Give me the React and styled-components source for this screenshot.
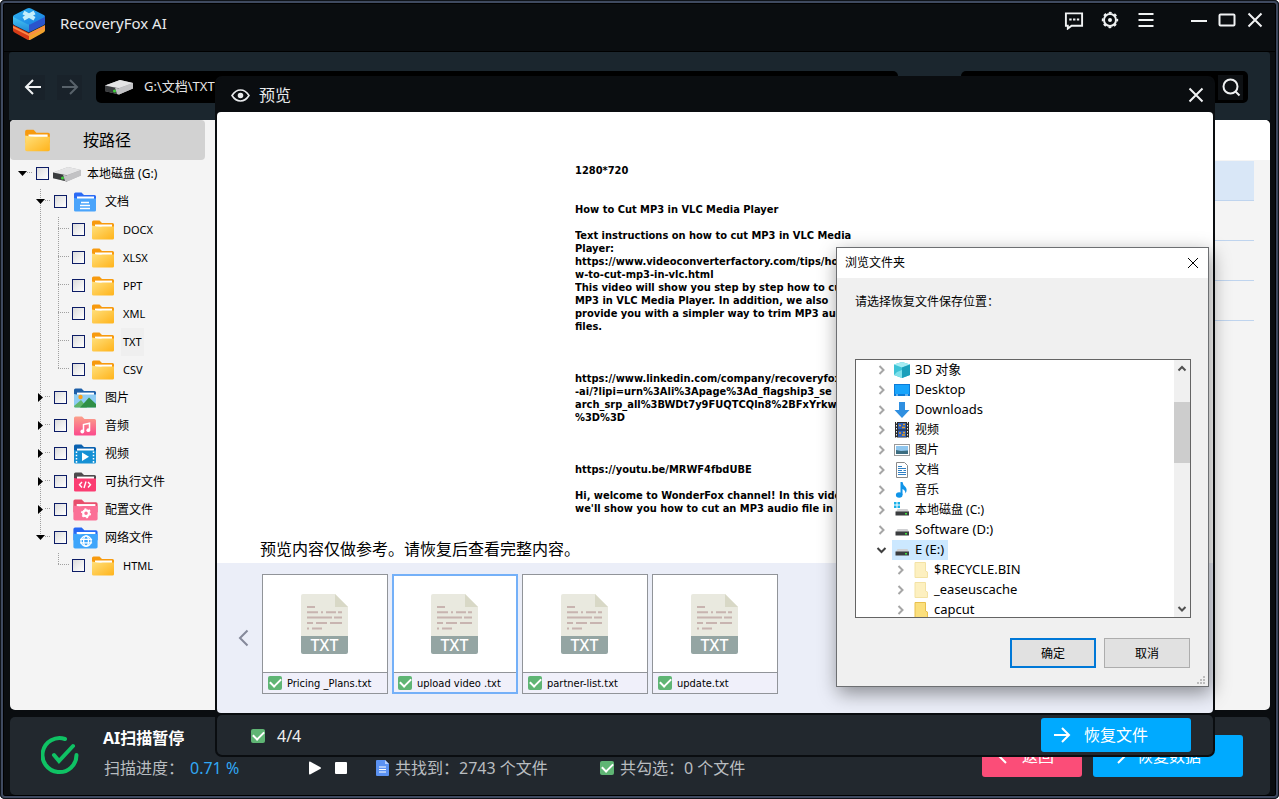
import React from "react";
import styled, { createGlobalStyle, css } from "styled-components";

const ui = `"Noto Sans", "Noto Sans CJK SC", sans-serif`;
const tahoma = `"DejaVu Sans Condensed", "Noto Sans", "Noto Sans CJK SC", sans-serif`;
const c = {
  frame: "#0a0d10",
  edge: "#3f4a60",
  toolbar: "#1b262e",
  panel: "#22282e",
  page: "#f4f4f4",
  strip: "#ebeef8",
  blue: "#00aaff",
  pink: "#fb4d78",
  muted: "#b9bdc0",
};

const Global = createGlobalStyle`
  * { box-sizing: border-box; }
  body { margin: 0; background: #fff; font-family: ${ui}; font-size: 12px; color: #000; }
  button { font-family: inherit; padding: 0; border: 0; background: none; color: inherit; }
  ul { list-style: none; margin: 0; padding: 0; }
  svg { display: block; flex: none; }
`;

/* ---------- frame ---------- */
const Frame = styled.div`
  position: relative;
  display: flex;
  flex-direction: column;
  min-height: 100vh;
  padding: 4px;
  overflow: hidden;
  border-radius: 5px;
  background: ${c.frame};
  box-shadow: inset 0 0 0 1px #10141a, inset 0 0 0 3px ${c.edge}, inset 0 0 0 4px #000;
`;
const TitleBar = styled.header`
  display: flex;
  align-items: flex-start;
  height: 48px;
  padding: 4px 10px 0 9px;
  border-bottom: 1px solid #000;
`;
const AppName = styled.h1`
  flex: 1;
  margin: 0 0 0 15px;
  font: 400 15px/30px "Noto Sans", sans-serif;
  color: #e8eaec;
`;
const Group = styled.div`
  display: flex;
  gap: ${(p) => p.$gap}px;
  margin-left: 33px;
  padding-top: 2px;
`;
const IconButton = styled.button`
  display: flex;
  align-items: center;
  justify-content: center;
  width: ${(p) => p.$size || 20}px;
  height: ${(p) => p.$size || 20}px;
  color: ${(p) => (p.$dim ? "#58626a" : "#f0f2f3")};
  background: ${(p) => p.$bg || "none"};
`;

/* ---------- tool bar ---------- */
const ToolBar = styled.nav`
  display: flex;
  align-items: center;
  height: 68px;
  margin: 0 5px;
  padding: 2px 22px 0 11px;
  background: ${c.toolbar};
  border-radius: 3px 3px 0 0;
`;
const NavButtons = styled.div`
  display: flex;
  gap: 12px;
  width: 76px;
`;
const PathBox = styled.label`
  display: flex;
  align-items: center;
  flex: 1;
  height: 32px;
  padding-left: 8px;
  gap: 10px;
  border-radius: 5px;
  background: #000;
`;
const SearchBox = styled(PathBox)`
  flex: 0 0 287px;
  margin-left: 63px;
  padding-right: 5px;
`;
const Field = styled.input`
  flex: 1;
  min-width: 0;
  height: 28px;
  padding: 0 0 4px;
  border: 0;
  outline: 0;
  background: none;
  color: #e6e6e6;
  font: 13px ${ui};
`;

/* ---------- main panes ---------- */
const Main = styled.main`
  display: flex;
  flex: 1;
  margin: 0 5px 0 6px;
  border-radius: 4px 5px 5px 5px;
  background: ${c.page};
  overflow: hidden;
`;
const SideBar = styled.aside`
  width: 195px;
`;
const SideTab = styled.button`
  display: flex;
  align-items: center;
  width: 100%;
  height: 40px;
  padding-left: 14px;
  gap: 32px;
  border-radius: 4px;
  background: #d2d2d2;
  font-size: 16px;
`;
const TabName = styled.span`
  padding-bottom: 2px;
`;
const Results = styled.table`
  flex: 1;
  align-self: flex-start;
  border-spacing: 0;
  margin-left: 10px;
`;
const HeadCell = styled.th`
  height: 41px;
  padding: 0;
  background: #fff;
  border-bottom: 1px solid ${c.page};
`;
const Cell = styled.td`
  height: 40px;
  padding: 0;
  background: ${(p) => (p.$active ? "#d9e7f7" : p.$edge ? c.page : "transparent")};
  border-bottom: 1px solid ${(p) => (p.$edge ? c.page : "#bfd4ee")};
  width: ${(p) => (p.$edge ? "16px" : "auto")};
`;

/* ---------- folder tree ---------- */
const dotsV = "repeating-linear-gradient(to bottom, #a0a0a0 0 1px, transparent 1px 2px)";
const dotsH = "repeating-linear-gradient(to right, #a0a0a0 0 1px, transparent 1px 2px)";
const Tree = styled.ul`
  padding-left: 8px;
`;
const Branch = styled.ul`
  padding-left: 18px;
`;
const Node = styled.li`
  ${(p) =>
    p.$joined &&
    css`
      background: ${dotsV} 4px 1px / 1px ${p.$last ? "12px" : "100%"} no-repeat;
    `}
`;
const NodeRow = styled.div`
  display: flex;
  align-items: center;
  height: 28px;
`;
const Stub = styled.span`
  display: flex;
  align-items: center;
  width: 15px;
  height: 26px;
  align-self: flex-start;
  margin-right: 3px;
  background: ${dotsH} ${(p) => (p.$leaf ? 4 : 9)}px 12px / ${(p) => (p.$leaf ? 11 : 6)}px 1px no-repeat;
`;
const Tick = styled.input`
  appearance: none;
  width: 13px;
  height: 13px;
  margin: 0 4px 2px 0;
  border: 1px solid #0c1c66;
  background: linear-gradient(135deg, #dcdcdc, #fff);
`;
const NodeIcon = styled.span`
  display: flex;
  justify-content: center;
  width: 28px;
  margin-right: 4px;
`;
const NodeLabel = styled.label`
  padding: 0 2px;
  font: 12px/28px ${ui};
  ${(p) => p.$latin && css`font-size: 11px;`}
  ${(p) => p.$active && css`background: #efefef;`}
`;

/* ---------- status bar ---------- */
const StatusBar = styled.footer`
  display: flex;
  height: 78px;
  margin: 7px 5px 0 6px;
  padding: 0 27px 0 31px;
  border-radius: 5px;
  background: ${c.panel};
`;
const StatusBody = styled.div`
  flex: 1;
  padding: 7px 0 0 24px;
`;
const StatusTitle = styled.h2`
  margin: 0;
  font: 700 16px/28px ${ui};
  color: #fff;
`;
const StatusRow = styled.div`
  display: flex;
  align-items: center;
  margin-top: 2px;
  padding-left: 1px;
  line-height: 28px;
  font-size: 16px;
  color: ${c.muted};
`;
const Progress = styled.span`
  width: 203px;
`;
const Percent = styled.span`
  margin-left: 6px;
  color: #31a8f5;
`;
const Count = styled.span`
  display: flex;
  align-items: center;
  gap: 6px;
  width: 224px;
`;
const PlayGroup = styled.div`
  display: flex;
  gap: 10px;
  width: 69px;
  color: #fff;
`;
const Actions = styled.div`
  display: flex;
  gap: 11px;
  padding-top: 18px;
`;
const Action = styled.button`
  display: flex;
  align-items: center;
  width: ${(p) => p.$w}px;
  height: ${(p) => p.$h}px;
  padding-left: ${(p) => p.$pad}px;
  gap: ${(p) => p.$gap}px;
  border-radius: 3px;
  background: ${(p) => p.$bg};
  color: #fff;
  font-size: 16px;
`;
const ActionName = styled.span`
  padding-bottom: 3px;
`;

/* ---------- preview window ---------- */
const Preview = styled.section`
  position: absolute;
  inset: 76px 64px 42px 215px;
  display: flex;
  flex-direction: column;
  border: 2px solid ${c.frame};
  border-radius: 7px;
  background: ${c.frame};
`;
const PreviewTitle = styled.div`
  display: flex;
  align-items: center;
  height: 34px;
  padding: 0 7px 0 14px;
  gap: 9px;
  color: #e8eaec;
`;
const PreviewName = styled.h2`
  flex: 1;
  margin: 0;
  font: 400 16px/28px ${ui};
`;
const Document = styled.div`
  display: flex;
  flex-direction: column;
  flex: 1;
  min-height: 0;
  padding: 52px 44px 0 43px;
  border-radius: 4px 4px 0 0;
  background: #fff;
`;
const DocText = styled.pre`
  flex: 1;
  width: 340px;
  min-height: 0;
  margin: 0 0 0 315px;
  overflow: hidden;
  font: 700 11px/13px ${tahoma};
`;
const Note = styled.p`
  margin: 0;
  padding-top: 18px;
  font: 16px/28px ${ui};
`;
const Strip = styled.div`
  display: flex;
  align-items: flex-start;
  height: 150px;
  padding: 11px 16px;
  border-radius: 0 0 4px 4px;
  background: ${c.strip};
`;
const Prev = styled(IconButton)`
  height: 128px;
  margin-right: 9px;
  color: #85899a;
`;
const Cards = styled.ul`
  display: flex;
  gap: 4px;
`;
const Card = styled.li`
  width: 126px;
  height: 120px;
  background: #fff;
  border: ${(p) => (p.$active ? "2px solid #74b0f8" : "1px solid #919499")};
  display: flex;
  flex-direction: column;
`;
const CardPicture = styled.div`
  flex: 1;
  display: flex;
  align-items: center;
  justify-content: center;
`;
const CardName = styled.label`
  display: flex;
  align-items: center;
  height: ${(p) => (p.$active ? 20 : 21)}px;
  padding: ${(p) => (p.$active ? "1px 0 0 4px" : "0 0 0 5px")};
  gap: 5px;
  border-top: 1px solid #919499;
  background: #f0f0fa;
  font: 11px ${tahoma};
`;
const GreenTick = styled.input`
  appearance: none;
  flex: none;
  width: 14px;
  height: 14px;
  margin: 0;
  border-radius: 2px;
  background: #5fb574;
  display: grid;
  place-items: center;
  &:checked::before {
    content: "";
    width: 9px;
    height: 5px;
    margin-bottom: 3px;
    border: solid #fff;
    border-width: 0 0 2px 2px;
    transform: rotate(-45deg);
  }
`;
const PreviewFoot = styled.div`
  display: flex;
  align-items: center;
  height: 40px;
  margin-top: 2px;
  padding: 0 22px 0 34px;
  border-radius: 5px;
  background: ${c.panel};
`;
const Total = styled.label`
  display: flex;
  align-items: center;
  flex: 1;
  gap: 12px;
  padding-top: 2px;
  color: #eee;
  font: 16px/28px ${ui};
`;

/* ---------- folder dialog ---------- */
const Dialog = styled.div`
  position: absolute;
  right: 70px;
  bottom: 112px;
  width: 373px;
  height: 440px;
  display: flex;
  flex-direction: column;
  border: 1px solid #6d6f72;
  background: #f0f0f0;
  box-shadow: 2px 6px 18px rgba(0, 0, 0, 0.42);
`;
const DialogTitle = styled.div`
  display: flex;
  align-items: center;
  justify-content: space-between;
  height: 30px;
  padding: 0 5px 0 8px;
  background: #fff;
`;
const DialogName = styled.h2`
  margin: 0;
  font: 400 12px/28px ${ui};
`;
const Prompt = styled.p`
  height: 81px;
  margin: 0;
  padding: 14px 18px 0;
  line-height: 20px;
`;
const ListBox = styled.div`
  display: flex;
  flex: 1;
  min-height: 0;
  margin: 0 17px 0 18px;
  border: 1px solid #646464;
  background: #fff;
`;
const Folders = styled.ul`
  flex: 1;
  overflow: hidden;
`;
const Folder = styled.li`
  display: flex;
  align-items: center;
  height: 20px;
  padding-left: ${(p) => (p.$deep ? 37 : 18)}px;
`;
const FolderName = styled.span`
  display: flex;
  align-items: center;
  gap: 5px;
  margin-left: 3px;
  padding: 0 4px 0 2px;
  height: 20px;
  background: ${(p) => (p.$active ? "#cce8ff" : "none")};
`;
const FolderText = styled.span`
  font: ${(p) => (p.$cjk ? 12 : 13)}px/18px ${ui};
  padding-bottom: ${(p) => (p.$cjk ? 0 : 2)}px;
`;
const Scroll = styled.div`
  display: flex;
  flex-direction: column;
  width: 16px;
  background: #f0f0f0;
  color: #505050;
`;
const Thumb = styled.div`
  height: 61px;
  margin: 25px 0 auto;
  background: #cdcdcd;
`;
const Buttons = styled.div`
  display: flex;
  justify-content: flex-end;
  gap: 8px;
  padding: 20px 18px 0;
`;
const DialogButton = styled.button`
  width: 86px;
  height: 30px;
  border: ${(p) => (p.$main ? "2px solid #0078d7" : "1px solid #adadad")};
  background: #e1e1e1;
  font-size: 12px;
`;
const Grip = styled.div`
  display: flex;
  justify-content: flex-end;
  height: 18px;
  padding: 8px 2px 0 0;
`;

/* ---------- drawings ---------- */
const Line = ({ w = 20, h = w, vb, sw = 2, d, children }) => (
  <svg width={w} height={h} viewBox={vb || `0 0 ${w} ${h}`} fill="none" stroke="currentColor" strokeWidth={sw}>
    {d && <path d={d} />}
    {children}
  </svg>
);
const Cross = ({ size = 20, sw = 2 }) => <Line w={size} vb="0 0 20 20" sw={sw} d="M3.5 3.5L16.5 16.5M16.5 3.5L3.5 16.5" />;

const Logo = () => (
  <svg width="32" height="32" viewBox="0 0 32 32">
    <defs>
      <linearGradient id="top" x1="0" y1="0" x2="1" y2="1">
        <stop offset="0" stopColor="#2cb2f2" />
        <stop offset="1" stopColor="#1a7fe0" />
      </linearGradient>
      <linearGradient id="left" x1="0" y1="0" x2="0" y2="1">
        <stop offset="0" stopColor="#49c8f5" />
        <stop offset="1" stopColor="#1c86d6" />
      </linearGradient>
    </defs>
    <path d="M0 17L16 25V32Q15 32 14 31.400L1.500 24.500Q0 23.600 0 22.500Z" fill="#d63c17" />
    <path d="M32 17L16 25V32Q17 32 18 31.400L30.500 24.500Q32 23.600 32 22.500Z" fill="#f2a22e" />
    <path d="M0 18L16 26L32 18V20L16 28L0 20Z" fill="#fb8a4a" />
    <path d="M0 8L16 15.500V24.500L1.500 17.300Q0 16.600 0 15.500Z" fill="url(#left)" />
    <path d="M32 8L16 15.500V24.500L30.500 17.300Q32 16.600 32 15.500Z" fill="#2a55cc" />
    <path d="M14 .6Q16 -.4 18 .6L30.800 7Q32.800 8.200 30.800 9.400L18 15.900Q16 16.900 14 15.900L1.200 9.400Q-.8 8.200 1.200 7Z" fill="url(#top)" />
    <path d="M10.500 4.500L21.500 10.800M21.500 4.500L10.500 10.800" stroke="#c4eefb" strokeWidth="4" />
  </svg>
);
const Drive = () => (
  <svg width="30" height="17" viewBox="0 0 30 17">
    <path d="M1 6.500L16 1L29 4V9.500L15 15.500L1 12Z" fill="#b4b4b6" />
    <path d="M1 6.500L16 1L29 4L15 9Z" fill="#e4e4e5" />
    <path d="M1 6.500L15 9.500V15.500L1 12.300Z" fill="#3a3c3e" />
    <path d="M11 8.700L15 9.500L29 4V9.500L15 15.500L13 15Z" fill="#c2c2c4" />
    <circle cx="10.500" cy="12" r="1.500" fill="#3fd23c" />
  </svg>
);
const FolderShape = ({ back, front, w = 24, children }) => (
  <svg width={w} height={w === 24 ? 20 : 22} viewBox="0 0 24 20">
    <path d="M1 2Q1 .5 2.500 .5H8.500L11 3H21.500Q23 3 23 4.500V12H1Z" fill={back} />
    <path d="M4 4.600H21V9H4Z" fill="#fff" />
    <path d="M1 6Q5 6.800 10 6.400H23V18.200Q23 19.500 21.500 19.500H2.500Q1 19.500 1 18.200Z" fill={front} />
    {children}
  </svg>
);
const Yellow = ({ w }) => (
  <svg width={w || 24} height={w ? w - 4 : 20} viewBox="0 0 24 20">
    <defs>
      <linearGradient id="gold" x1="0" y1="0" x2="1" y2="1">
        <stop offset="0" stopColor="#ffe07c" />
        <stop offset="1" stopColor="#ffb31a" />
      </linearGradient>
    </defs>
    <path d="M1 2Q1 .5 2.500 .5H8.500L11 3H21.500Q23 3 23 4.500V12H1Z" fill="#f79a0e" />
    <path d="M4 4.600H21V9H4Z" fill="#fff" />
    <path d="M1 5.500Q8 7 11.500 6.600H23V18.200Q23 19.500 21.500 19.500H2.500Q1 19.500 1 18.200Z" fill="url(#gold)" />
  </svg>
);
const DocsIcon = () => (
  <FolderShape back="#2a6af5" front="#4aa4fb">
    <path d="M8 10.500H16M7 13.500H17M7 16.500H17" stroke="#fff" strokeWidth="1.500" />
  </FolderShape>
);
const PicsIcon = () => (
  <FolderShape back="#1d5fa8" front="#8fcdf3">
    <circle cx="7.500" cy="9" r="2.200" fill="#f9a11b" />
    <path d="M1 18L8 12L14 19.500H2.500Q1 19.500 1 18Z" fill="#5fb56a" />
    <path d="M7 19.500L16 9.500L23 16V19.500Z" fill="#2f8f46" />
  </FolderShape>
);
const AudioIcon = () => (
  <svg width="24" height="20" viewBox="0 0 24 20">
    <defs>
      <linearGradient id="rose" x1="0" y1="0" x2="0" y2="1">
        <stop offset="0" stopColor="#fba08a" />
        <stop offset="1" stopColor="#fb4a8c" />
      </linearGradient>
    </defs>
    <path d="M1 2Q1 .5 2.500 .5H9L11.500 3H21.500Q23 3 23 4.500V18.200Q23 19.500 21.500 19.500H2.500Q1 19.500 1 18.200Z" fill="url(#rose)" />
    <path d="M10.500 15.500V8.500L16.500 7.200V14" stroke="#fff" strokeWidth="1.500" fill="none" />
    <circle cx="9.300" cy="15.500" r="1.900" fill="#fff" />
    <circle cx="15.300" cy="14.200" r="1.900" fill="#fff" />
  </svg>
);
const VideoIcon = () => (
  <FolderShape back="#0b62b0" front="#1590d4">
    <path d="M3.500 7.500V19M20.500 7.500V19" stroke="#fff" strokeWidth="1.500" strokeDasharray="1.600 1.600" />
    <path d="M9 8.500L16 12.800L9 17Z" fill="#fff" />
  </FolderShape>
);
const CodeIcon = () => (
  <FolderShape back="#4d4a4c" front="#fb3d72">
    <path d="M9 10L6.500 12.800L9 15.500M15 10L17.500 12.800L15 15.500M13 9.500L11 16" stroke="#fff" strokeWidth="1.400" fill="none" />
  </FolderShape>
);
const ConfigIcon = () => (
  <FolderShape back="#e84e6c" front="#fb7096" w={27}>
    <circle cx="12.500" cy="13" r="2.600" stroke="#fff" strokeWidth="2" fill="none" />
    <circle cx="12.500" cy="13" r="3.900" stroke="#fff" strokeWidth="1.300" strokeDasharray="1.800 2.284" fill="none" />
  </FolderShape>
);
const WebIcon = () => (
  <FolderShape back="#2668f5" front="#3ea5fb" w={27}>
    <g stroke="#fff" strokeWidth="1.200" fill="none">
      <circle cx="12.500" cy="12.800" r="4.700" />
      <ellipse cx="12.500" cy="12.800" rx="2.200" ry="4.700" />
      <path d="M7 11.200H18M7 14.400H18" />
    </g>
  </FolderShape>
);
const TxtIcon = () => (
  <svg width="48" height="60" viewBox="0 0 48 60">
    <path d="M2 0H34L47 13V42H0V2Q0 0 2 0Z" fill="#e9e9df" />
    <path d="M34 0L47 13H34Z" fill="#d8d8c6" />
    <path d="M0 42H47V58Q47 60 45 60H2Q0 60 0 58Z" fill="#94a5a3" />
    <path
      d="M6 13H14M6 18.300H17M20 18.300H22M25 18.300H35M37 18.300H41M6 23.600H31M33 23.600H41M6 29H12M15 29H26M29 29H41M6 34.500H8M11 34.500H21"
      stroke="#c8b4b0"
      strokeWidth="2"
    />
    <text x="23.500" y="57" textAnchor="middle" fontFamily="Noto Sans, sans-serif" fontSize="16" fontWeight="500" fill="#fff">
      TXT
    </text>
  </svg>
);
const Triangle = ({ open }) => (
  <svg width="9" height="9" viewBox="0 0 9 9">
    <path d={open ? "M0 2H9L4.500 7Z" : "M2 0V9L7 4.500Z"} fill="#000" />
  </svg>
);
const S16 = ({ children }) => (
  <svg width="16" height="16" viewBox="0 0 16 16">
    {children}
  </svg>
);
const HardDisk = ({ win }) => (
  <S16>
    {win && <path d="M0 0H2.500V2.500H0ZM3.500 0H6V2.500H3.500ZM0 3.500H2.500V6H0ZM3.500 3.500H6V6H3.500Z" fill="#19b0e8" />}
    <path d="M3.500 7H13.500L15 10H2Z" fill="#cfd0d2" />
    <rect x="1.500" y="9.500" width="13.500" height="4" fill="#3a3d3f" />
    <rect x="11" y="11" width="2" height="1.500" fill="#3fe03c" />
  </S16>
);
const smallIcons = {
  cube: (
    <S16>
      <path d="M0 2.500L8 0L16 2.500V13L8 16L0 13Z" fill="#3cc3d6" />
      <path d="M0 2.500L8 0L16 2.500L8 5.500Z" fill="#a4ecf2" />
      <path d="M8 5.500L16 2.500V13L8 16Z" fill="#1a9fba" />
      <path d="M3 10L8 8V16L0 13Z" fill="#7fe0ea" />
    </S16>
  ),
  desktop: (
    <S16>
      <rect y="2" width="16" height="12" fill="#0c7cd8" />
      <rect x="1" y="3" width="14" height="9" fill="#18a4fb" />
      <path d="M2 13H4M11 13H14" stroke="#bfe4ff" />
    </S16>
  ),
  down: (
    <S16>
      <path d="M5 0H11V8H15.500L8 16L.5 8H5Z" fill="#2f8fe0" />
    </S16>
  ),
  film: (
    <S16>
      <rect x="1" y="0" width="14" height="15.500" fill="#2b2b2b" />
      <path d="M2.500 0V16M13.500 0V16" stroke="#eee" strokeDasharray="1.500 1.500" />
      <rect x="4" y="1" width="8" height="6.500" fill="#2d5fb8" />
      <rect x="4" y="8.500" width="8" height="6.500" fill="#2d5fb8" />
      <path d="M5 3.500H7M9 2.500H11M8 5.500H11M5 11H7M8 13H11M9 10.500H11" stroke="#e8a020" strokeWidth="1.500" fill="none" />
    </S16>
  ),
  picture: (
    <S16>
      <rect x=".5" y="2.500" width="15" height="11" fill="#fff" stroke="#9a9a9a" />
      <rect x="2" y="4" width="12" height="8" fill="#8fc6ee" />
      <path d="M2 8L7 9L14 8.500V12H2Z" fill="#3c6d80" />
    </S16>
  ),
  page: (
    <S16>
      <path d="M2.500 .5H10.500L13.500 3.500V15.500H2.500Z" fill="#fff" stroke="#8a8a8a" />
      <path d="M4 4.500H8M4 6.500H12M4 8.500H8M4 12.500H12M9.500 8.500H12M4 10.500H12" stroke="#2f7fc4" />
    </S16>
  ),
  note: (
    <S16>
      <path d="M6.500 0H8.500Q9 3 11 4.500Q14 7.500 11.500 11.500Q11.500 8 8.500 7V13H6.500Z" fill="#1094e8" />
      <ellipse cx="5.200" cy="13" rx="3.300" ry="2.700" fill="#1094e8" />
    </S16>
  ),
  winDisk: <HardDisk win />,
  disk: <HardDisk />,
  pale: (
    <S16>
      <path d="M2 .5H12.500V9L14.500 10V15.500H2Z" fill="#fdf0c0" stroke="#f3e2a4" />
    </S16>
  ),
  gold: (
    <S16>
      <path d="M2 .5H12.500V9L14.500 10V15.500H2Z" fill="#fbdf7c" stroke="#e8c04c" />
    </S16>
  ),
};

/* ---------- data ---------- */
const tree = [
  {
    name: "本地磁盘 (G:)", icon: <Drive />, open: true,
    kids: [
      {
        name: "文档", icon: <DocsIcon />, open: true,
        kids: ["DOCX", "XLSX", "PPT", "XML", "TXT", "CSV"].map((n) => ({ name: n, icon: <Yellow />, latin: true, active: n === "TXT" })),
      },
      { name: "图片", icon: <PicsIcon />, closed: true },
      { name: "音频", icon: <AudioIcon />, closed: true },
      { name: "视频", icon: <VideoIcon />, closed: true },
      { name: "可执行文件", icon: <CodeIcon />, closed: true },
      { name: "配置文件", icon: <ConfigIcon />, closed: true },
      { name: "网络文件", icon: <WebIcon />, open: true, kids: [{ name: "HTML", icon: <Yellow />, latin: true }] },
    ],
  },
];

const TreeNode = ({ node, depth, last }) => {
  const id = `node-${depth}-${node.name}`;
  return (
    <Node $joined={depth > 0} $last={last}>
      <NodeRow>
        <Stub $leaf={!node.open && !node.closed}>{(node.open || node.closed) && <Triangle open={node.open} />}</Stub>
        <Tick type="checkbox" id={id} />
        <NodeIcon>{node.icon}</NodeIcon>
        <NodeLabel htmlFor={id} $latin={node.latin} $active={node.active}>{node.name}</NodeLabel>
      </NodeRow>
      {node.kids && (
        <Branch>
          {node.kids.map((k, i) => (
            <TreeNode key={k.name} node={k} depth={depth + 1} last={i === node.kids.length - 1} />
          ))}
        </Branch>
      )}
    </Node>
  );
};

const files = ["Pricing _Plans.txt", "upload video .txt", "partner-list.txt", "update.txt"];

const folders = [
  ["cube", "3D 对象"], ["desktop", "Desktop"], ["down", "Downloads"], ["film", "视频"], ["picture", "图片"],
  ["page", "文档"], ["note", "音乐"], ["winDisk", "本地磁盘 (C:)"], ["disk", "Software (D:)"], ["disk", "E (E:)", "open"],
  ["pale", "$RECYCLE.BIN", "deep"], ["pale", "_easeuscache", "deep"], ["gold", "capcut", "deep"],
];

const docText = `1280*720


How to Cut MP3 in VLC Media Player

Text instructions on how to cut MP3 in VLC Media
Player:
https://www.videoconverterfactory.com/tips/ho
w-to-cut-mp3-in-vlc.html
This video will show you step by step how to cut
MP3 in VLC Media Player. In addition, we also
provide you with a simpler way to trim MP3 audio
files.



https://www.linkedin.com/company/recoveryfox
-ai/?lipi=urn%3Ali%3Apage%3Ad_flagship3_se
arch_srp_all%3BWDt7y9FUQTCQln8%2BFxYrkw
%3D%3D



https://youtu.be/MRWF4fbdUBE

Hi, welcome to WonderFox channel! In this video
we'll show you how to cut an MP3 audio file in VLC`;

const ArrowRight = ({ size = 18 }) => <Line w={size} vb="0 0 18 18" d="M1 9H16M9 2L16 9L9 16" />;

export default function App() {
  return (
    <>
      <Global />
      <Frame>
        <TitleBar>
          <Logo />
          <AppName>RecoveryFox AI</AppName>
          <Group $gap={16}>
            <IconButton aria-label="反馈">
              <Line d="M2 3H19V16H8L4 19V16H2Z" vb="0 0 21 20" sw={2}>
                <path d="M5.500 9.500H8M9.500 9.500H12M13.500 9.500H16" />
              </Line>
            </IconButton>
            <IconButton aria-label="设置">
              <Line sw={2}>
                <circle cx="10" cy="10" r="6" />
                <circle cx="10" cy="10" r="7.400" strokeWidth="1.600" strokeDasharray="2.900 2.912" strokeDashoffset="1.450" />
                <circle cx="10" cy="10" r="1" />
              </Line>
            </IconButton>
            <IconButton aria-label="菜单"><Line d="M2.500 4H17.500M2.500 10H17.500M2.500 16H17.500" /></IconButton>
          </Group>
          <Group $gap={8}>
            <IconButton aria-label="最小化"><Line d="M2 11H18" /></IconButton>
            <IconButton aria-label="最大化"><Line><rect x="2.500" y="4.500" width="15" height="11" rx="1" /></Line></IconButton>
            <IconButton aria-label="关闭"><Cross /></IconButton>
          </Group>
        </TitleBar>

        <ToolBar>
          <NavButtons>
            <IconButton $size={25} $bg="#19222a" aria-label="后退"><Line w={18} d="M17 9H2M9 2L2 9L9 16" /></IconButton>
            <IconButton $size={25} $bg="#19222a" $dim aria-label="前进"><ArrowRight /></IconButton>
          </NavButtons>
          <PathBox>
            <Drive />
            <Field defaultValue="G:\文档\TXT" aria-label="路径" />
          </PathBox>
          <SearchBox>
            <Field aria-label="搜索" />
            <IconButton $size={25} $bg="#0d1013" aria-label="开始搜索">
              <Line w={20} d="M14.500 14.500L18.500 18.500"><circle cx="9.500" cy="9.500" r="7" /></Line>
            </IconButton>
          </SearchBox>
        </ToolBar>

        <Main>
          <SideBar>
            <SideTab><Yellow w={27} /><TabName>按路径</TabName></SideTab>
            <Tree>{tree.map((n) => <TreeNode key={n.name} node={n} depth={0} last />)}</Tree>
          </SideBar>
          <Results>
            <thead><tr><HeadCell colSpan={2} /></tr></thead>
            <tbody>
              {[0, 1, 2, 3].map((i) => (
                <tr key={i}><Cell $active={i === 0} /><Cell $edge /></tr>
              ))}
            </tbody>
          </Results>
        </Main>

        <StatusBar>
          <svg width="38" height="76" viewBox="0 0 38 76" fill="none" stroke="#0fc264" strokeWidth="4" strokeLinecap="round">
            <path d="M24 22A17 17 0 1 0 35.500 38" />
            <path d="M13 38L18 44L32 29" />
          </svg>
          <StatusBody>
            <StatusTitle>AI扫描暂停</StatusTitle>
            <StatusRow>
              <Progress>扫描进度：<Percent>0.71 %</Percent></Progress>
              <PlayGroup>
                <IconButton $size={16} aria-label="继续">
                  <svg width="14" height="14" viewBox="0 0 14 14">
                    <path d="M1 1.500Q1 0 2.500 .8L12.500 6.200Q13.500 7 12.500 7.800L2.500 13.200Q1 14 1 12.500Z" fill="#fff" />
                  </svg>
                </IconButton>
                <IconButton $size={16} aria-label="停止">
                  <svg width="12" height="12" viewBox="0 0 12 12"><rect width="12" height="12" rx="1" fill="#fff" /></svg>
                </IconButton>
              </PlayGroup>
              <Count>
                <svg width="13" height="16" viewBox="0 0 13 16">
                  <path d="M0 1Q0 0 1 0H9L13 4V15Q13 16 12 16H1Q0 16 0 15Z" fill="#5b92f2" />
                  <path d="M9 0L13 4H9Z" fill="#b7cffb" />
                  <path d="M3 7H10M3 9.500H10M3 12H10" stroke="#fff" />
                </svg>
                <span>共找到：2743 个文件</span>
              </Count>
              <Count as="label">
                <GreenTick type="checkbox" defaultChecked />
                共勾选：0 个文件
              </Count>
            </StatusRow>
          </StatusBody>
          <Actions>
            <Action $w={100} $h={42} $pad={14} $gap={14} $bg={c.pink}>
              <Line w={12} h={18} d="M10 2L3 9L10 16" /><ActionName>返回</ActionName>
            </Action>
            <Action $w={150} $h={42} $pad={16} $gap={10} $bg={c.blue}><ArrowRight /><ActionName>恢复数据</ActionName></Action>
          </Actions>
        </StatusBar>

        <Preview>
          <PreviewTitle>
            <Line w={19} h={13} sw={1.6} d="M1 6.500Q4.500 1 9.500 1T18 6.500Q14.500 12 9.500 12T1 6.500Z">
              <circle cx="9.500" cy="6.500" r="2" fill="currentColor" />
            </Line>
            <PreviewName>预览</PreviewName>
            <IconButton aria-label="关闭预览"><Cross /></IconButton>
          </PreviewTitle>
          <Document>
            <DocText>{docText}</DocText>
            <Note>预览内容仅做参考。请恢复后查看完整内容。</Note>
          </Document>
          <Strip>
            <Prev aria-label="上一个"><Line w={12} h={18} d="M10.500 1.500L3 9L10.500 16.500" /></Prev>
            <Cards>
              {files.map((f, i) => (
                <Card key={f} $active={i === 1}>
                  <CardPicture><TxtIcon /></CardPicture>
                  <CardName $active={i === 1}><GreenTick type="checkbox" defaultChecked />{f}</CardName>
                </Card>
              ))}
            </Cards>
          </Strip>
          <PreviewFoot>
            <Total><GreenTick type="checkbox" defaultChecked />4/4</Total>
            <Action $w={150} $h={34} $pad={12} $gap={13} $bg={c.blue}><ArrowRight /><ActionName>恢复文件</ActionName></Action>
          </PreviewFoot>
        </Preview>

        <Dialog role="dialog" aria-label="浏览文件夹">
          <DialogTitle>
            <DialogName>浏览文件夹</DialogName>
            <IconButton aria-label="关闭对话框">
              <svg width="12" height="12" viewBox="0 0 12 12" stroke="#000"><path d="M1 1L11 11M11 1L1 11" /></svg>
            </IconButton>
          </DialogTitle>
          <Prompt>请选择恢复文件保存位置：</Prompt>
          <ListBox>
            <Folders>
              {folders.map(([icon, name, kind]) => (
                <Folder key={name} $deep={kind === "deep"}>
                  <svg width="15" height="12" viewBox="0 0 15 12" fill="none" stroke={kind === "open" ? "#404040" : "#a6a6a6"} strokeWidth="2">
                    <path d={kind === "open" ? "M3.500 4L7.500 8L11.500 4" : "M5.500 2L9.500 6L5.500 10"} />
                  </svg>
                  <FolderName $active={kind === "open"}>
                    {smallIcons[icon]}
                    <FolderText $cjk={/^[^\x00-\x7f]/.test(name)}>{name}</FolderText>
                  </FolderName>
                </Folder>
              ))}
            </Folders>
            <Scroll>
              <Line w={16} h={17} d="M4.500 10.500L8 7L11.500 10.500" />
              <Thumb />
              <Line w={16} h={17} d="M4.500 7L8 10.500L11.500 7" />
            </Scroll>
          </ListBox>
          <Buttons>
            <DialogButton $main>确定</DialogButton>
            <DialogButton>取消</DialogButton>
          </Buttons>
          <Grip>
            <svg width="9" height="9" viewBox="0 0 9 9" fill="#bdbdbd">
              <path d="M6 0h2v2h-2zM3 3h2v2h-2zM6 3h2v2h-2zM0 6h2v2h-2zM3 6h2v2h-2zM6 6h2v2h-2z" />
            </svg>
          </Grip>
        </Dialog>
      </Frame>
    </>
  );
}
